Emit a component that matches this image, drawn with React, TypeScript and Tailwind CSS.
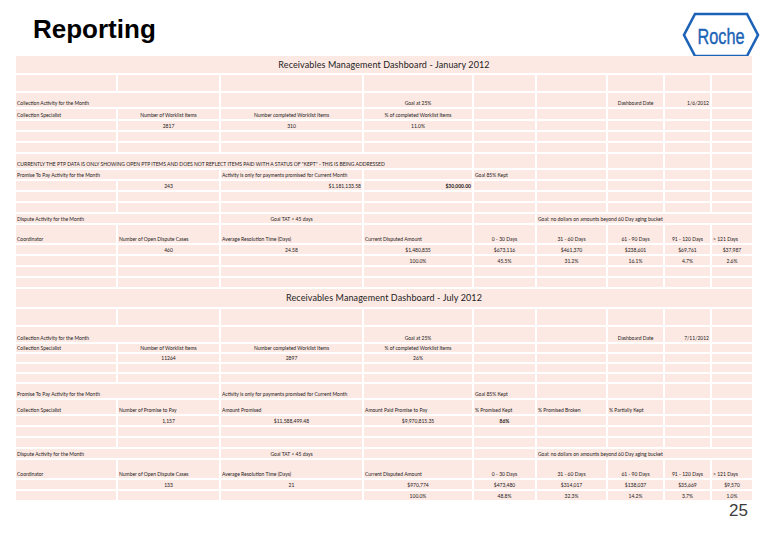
import React from 'react'

type Align = 'l' | 'c' | 'r'

interface Cell {
  t?: string
  span?: number
  a?: Align
  b?: boolean
}

interface Row {
  h: number
  cells: Cell[]
  title?: boolean
}

const empty = (n: number): Cell[] => Array.from({ length: n }, () => ({}))

const blankRow = (h: number): Row => ({ h, cells: empty(9) })

function dashboard(month: string, date: string, d: {
  worklist: [string, string, string]
  ptpTop: Cell[]
  ptpVals: Cell[]
  dispVals: string[]
  dispPct: string[]
  sizes: { ca: number; spec: number; small: number; ptp: number }
  note?: boolean
}): Row[] {
  const { sizes } = d
  const rows: Row[] = [
    { h: 17, title: true, cells: [{ t: `Receivables Management Dashboard - ${month}`, span: 9, a: 'c' }] },
    blankRow(16),
    {
      h: sizes.ca,
      cells: [
        { t: 'Collection Activity for the Month', span: 2 },
        {},
        { t: 'Goal at 25%', a: 'c' },
        {},
        {},
        { t: 'Dashboard Date', a: 'c' },
        { t: date, a: 'r' },
        {},
      ],
    },
    {
      h: sizes.spec,
      cells: [
        { t: 'Collection Specialist' },
        { t: 'Number of Worklist Items', a: 'c' },
        { t: 'Number completed Worklist Items', a: 'c' },
        { t: '% of completed Worklist Items', a: 'c' },
        ...empty(5),
      ],
    },
    {
      h: sizes.small,
      cells: [{}, { t: d.worklist[0], a: 'c' }, { t: d.worklist[1], a: 'c' }, { t: d.worklist[2], a: 'c' }, ...empty(5)],
    },
    blankRow(sizes.small),
    blankRow(sizes.small),
  ]

  if (d.note) {
    rows.push({
      h: 14,
      cells: [
        {
          t: 'CURRENTLY THE PTP DATA IS ONLY SHOWING OPEN PTP ITEMS AND DOES NOT REFLECT ITEMS PAID WITH A STATUS OF "KEPT" - THIS IS BEING ADDRESSED',
          span: 4,
        },
        ...empty(5),
      ],
    })
  }

  rows.push(
    {
      h: sizes.ptp,
      cells: [
        { t: 'Promise To Pay Activity for the Month', span: 2 },
        { t: 'Activity is only for payments promised for Current Month' },
        {},
        { t: 'Goal 85% Kept' },
        ...empty(4),
      ],
    },
    ...d.ptpTop.length ? [{ h: 14, cells: d.ptpTop }] : [],
    { h: 9, cells: d.ptpVals },
    blankRow(9),
    blankRow(9),
    {
      h: 9,
      cells: [
        { t: 'Dispute Activity for the Month', span: 2 },
        { t: 'Goal TAT < 45 days', a: 'c' },
        {},
        {},
        { t: 'Goal: no dollars on amounts beyond 60 Day aging bucket', span: 4 },
      ],
    },
    {
      h: 18,
      cells: [
        { t: 'Coordinator' },
        { t: 'Number of Open Dispute Cases' },
        { t: 'Average Resolution Time (Days)' },
        { t: 'Current Disputed Amount' },
        { t: '0 - 30 Days', a: 'c' },
        { t: '31 - 60 Days', a: 'c' },
        { t: '61 - 90 Days', a: 'c' },
        { t: '91 - 120 Days', a: 'c' },
        { t: '> 121 Days' },
      ],
    },
    { h: 9, cells: [{}, ...d.dispVals.map((t) => ({ t, a: 'c' as Align }))] },
    { h: 9, cells: [{}, {}, {}, ...d.dispPct.map((t) => ({ t, a: 'c' as Align }))] },
  )
  return rows
}

const january = dashboard('January 2012', '1/6/2012', {
  worklist: ['2817', '310', '11.0%'],
  ptpTop: [],
  ptpVals: [{}, { t: '243', a: 'c' }, { t: '$1,181,133.58', a: 'r' }, { t: '$30,000.00', a: 'r', b: true }, ...empty(5)],
  dispVals: ['460', '24.58', '$1,480,835', '$673,116', '$461,370', '$238,601', '$69,761', '$37,987'],
  dispPct: ['100.0%', '45.5%', '31.2%', '16.1%', '4.7%', '2.6%'],
  sizes: { ca: 14, spec: 10, small: 9, ptp: 9 },
  note: true,
})

const july = dashboard('July 2012', '7/11/2012', {
  worklist: ['11264', '2897', '26%'],
  ptpTop: [
    { t: 'Collection Specialist' },
    { t: 'Number of Promise to Pay' },
    { t: 'Amount Promised' },
    { t: 'Amount Paid Promise to Pay' },
    { t: '% Promised Kept' },
    { t: '% Promised Broken' },
    { t: '% Partially Kept' },
    {},
    {},
  ],
  ptpVals: [
    {},
    { t: '1,157', a: 'c' },
    { t: '$11,588,499.48', a: 'c' },
    { t: '$9,970,815.35', a: 'c' },
    { t: '86%', a: 'c', b: true },
    ...empty(4),
  ],
  dispVals: ['133', '21', '$970,774', '$473,480', '$314,017', '$138,037', '$35,669', '$9,570'],
  dispPct: ['100.0%', '48.8%', '32.3%', '14.2%', '3.7%', '1.0%'],
  sizes: { ca: 15, spec: 8, small: 8, ptp: 14 },
})

const rows: Row[] = [...january, blankRow(9), blankRow(9), ...july]
// july title sits a touch taller than the january one
rows.splice(january.length + 2, 1, { ...rows[january.length + 2], h: 18 })

const spanClass: Record<number, string> = {
  1: 'col-span-1',
  2: 'col-span-2',
  4: 'col-span-4',
  9: 'col-span-9',
}

const alignClass: Record<Align, string> = {
  l: 'justify-start pl-[1px]',
  c: 'justify-center',
  r: 'justify-end pr-[1px]',
}

function TableRow({ row }: { row: Row }) {
  return (
    <div
      className="grid grid-cols-[100px_101px_141px_108px_61px_69px_55px_45px_40px] gap-x-[2px]"
      style={{ height: row.h }}
    >
      {row.cells.map((c, i) => (
        <div
          key={i}
          className={`flex bg-[#fde9e4] whitespace-nowrap ${spanClass[c.span ?? 1]} ${alignClass[c.a ?? 'l']} ${
            row.title ? 'items-center' : 'items-end pb-[1px]'
          }`}
        >
          {c.t &&
            (row.title ? (
              <span className="font-['Lato',sans-serif] text-[9px] tracking-[0.1px] text-[#222]">{c.t}</span>
            ) : (
              <span
                className={`font-['Lato',sans-serif] text-[5px] leading-[6px] text-[#1a1a1a] ${c.b ? 'font-bold' : ''}`}
              >
                {c.t}
              </span>
            ))}
        </div>
      ))}
    </div>
  )
}

function RocheLogo() {
  return (
    <svg width="80" height="46" viewBox="0 0 80 46">
      <polygon points="14,2 66,2 77,23 66,44 14,44 3,23" fill="none" stroke="#1c63b7" strokeWidth="2.6" />
      <text
        x="40"
        y="32"
        textAnchor="middle"
        fontFamily="Liberation Sans, sans-serif"
        fontSize="22"
        fill="#1c63b7"
        stroke="#1c63b7"
        strokeWidth="0.4"
        textLength="47"
        lengthAdjust="spacingAndGlyphs"
      >
        Roche
      </text>
    </svg>
  )
}

export default function App() {
  return (
    <div className="w-[780px] h-[540px] bg-white overflow-hidden">
      <div className="flex h-[56px]">
        <h1 className="pl-[33px] pt-[14px] font-['Liberation_Sans',Arial,sans-serif] font-bold text-[26px] leading-[30px] text-black">
          Reporting
        </h1>
        <div className="ml-auto mr-[19px] mt-[12px]">
          <RocheLogo />
        </div>
      </div>
      <div className="ml-[16px] w-[736px] flex flex-col gap-y-[2px]">
        {rows.map((r, i) => (
          <TableRow key={i} row={r} />
        ))}
      </div>
      <div className="flex justify-end pr-[32px] mt-[2px]">
        <span className="font-['Liberation_Sans',Arial,sans-serif] text-[17px] leading-[17px] text-[#3c3c3c]">25</span>
      </div>
    </div>
  )
}
